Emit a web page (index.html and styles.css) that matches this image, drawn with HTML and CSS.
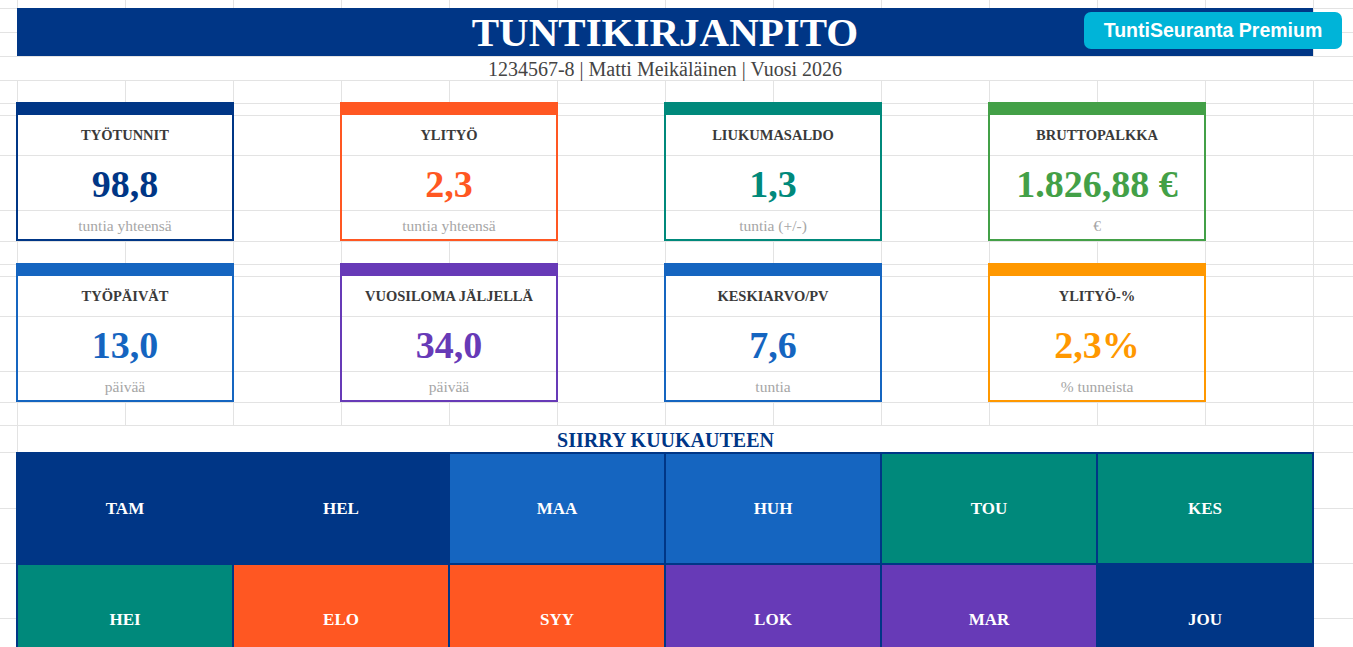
FILE: index.html
```html
<!DOCTYPE html>
<html lang="fi">
<head>
  <meta charset="UTF-8" />
  <meta name="viewport" content="width=device-width, initial-scale=1.0"/>
  <title>Tuntikirjanpito</title>
  <link rel="stylesheet" href="styles.css">
</head>
<body>
  <header class="title-bar">
    <h1>TUNTIKIRJANPITO</h1>
    <a class="premium" href="#">TuntiSeuranta Premium</a>
  </header>
  <div class="subtitle">1234567-8 | Matti Meikäläinen | Vuosi 2026</div>

  <div class="cards">
    <div class="card navy">
      <div class="card-label">TYÖTUNNIT</div>
      <div class="card-value">98,8</div>
      <div class="card-note">tuntia yhteensä</div>
    </div>
    <div class="card red">
      <div class="card-label">YLITYÖ</div>
      <div class="card-value">2,3</div>
      <div class="card-note">tuntia yhteensä</div>
    </div>
    <div class="card teal">
      <div class="card-label">LIUKUMASALDO</div>
      <div class="card-value">1,3</div>
      <div class="card-note">tuntia (+/-)</div>
    </div>
    <div class="card green">
      <div class="card-label">BRUTTOPALKKA</div>
      <div class="card-value">1.826,88 €</div>
      <div class="card-note">€</div>
    </div>
    <div class="card blue">
      <div class="card-label">TYÖPÄIVÄT</div>
      <div class="card-value">13,0</div>
      <div class="card-note">päivää</div>
    </div>
    <div class="card purple">
      <div class="card-label">VUOSILOMA JÄLJELLÄ</div>
      <div class="card-value">34,0</div>
      <div class="card-note">päivää</div>
    </div>
    <div class="card blue">
      <div class="card-label">KESKIARVO/PV</div>
      <div class="card-value">7,6</div>
      <div class="card-note">tuntia</div>
    </div>
    <div class="card orange">
      <div class="card-label">YLITYÖ-%</div>
      <div class="card-value">2,3%</div>
      <div class="card-note">% tunneista</div>
    </div>
  </div>

  <h2 class="section-title">SIIRRY KUUKAUTEEN</h2>
  <nav class="months">
    <a class="month navy" href="#">TAM</a>
    <a class="month navy" href="#">HEL</a>
    <a class="month blue" href="#">MAA</a>
    <a class="month blue" href="#">HUH</a>
    <a class="month teal" href="#">TOU</a>
    <a class="month teal" href="#">KES</a>
    <a class="month teal" href="#">HEI</a>
    <a class="month red" href="#">ELO</a>
    <a class="month red" href="#">SYY</a>
    <a class="month purple" href="#">LOK</a>
    <a class="month purple" href="#">MAR</a>
    <a class="month navy" href="#">JOU</a>
  </nav>
</body>
</html>
```

FILE: styles.css
```css
:root {
  --grid: #e3e3e3;
  --navy: #003686;
}

html, body {
  height: 100%;
}

/* sheet background: column lines every 108px, row lines at the sheet's row edges */
body {
  margin: 0;
  overflow: hidden;
  font-family: "Liberation Serif", "Times New Roman", serif;
  background-color: #fff;
  background-image:
    linear-gradient(90deg, var(--grid) 1px, transparent 1px),
    linear-gradient(180deg,
      transparent 8px, var(--grid) 8px 9px, transparent 9px 32px,
      var(--grid) 32px 33px, transparent 33px 56px,
      var(--grid) 56px 57px, transparent 57px 80px,
      var(--grid) 80px 81px, transparent 81px 103px,
      var(--grid) 103px 104px, transparent 104px 115px,
      var(--grid) 115px 116px, transparent 116px 155px,
      var(--grid) 155px 156px, transparent 156px 210px,
      var(--grid) 210px 211px, transparent 211px 241px,
      var(--grid) 241px 242px, transparent 242px 264px,
      var(--grid) 264px 265px, transparent 265px 276px,
      var(--grid) 276px 277px, transparent 277px 316px,
      var(--grid) 316px 317px, transparent 317px 371px,
      var(--grid) 371px 372px, transparent 372px 402px,
      var(--grid) 402px 403px, transparent 403px 425px,
      var(--grid) 425px 426px, transparent 426px 452px,
      var(--grid) 452px 453px, transparent 453px 508px,
      var(--grid) 508px 509px, transparent 509px 563px,
      var(--grid) 563px 564px, transparent 564px 618px,
      var(--grid) 618px 619px, transparent 619px);
  background-size: 108px 100%, 100% 100%;
  background-position: 17px 0, 0 0;
  background-repeat: repeat-x, no-repeat;
}

.navy   { --c: var(--navy); }
.red    { --c: #ff5722; }
.teal   { --c: #00897b; }
.green  { --c: #43a047; }
.blue   { --c: #1565c0; }
.purple { --c: #673ab7; }
.orange { --c: #ff9800; }

.title-bar {
  position: relative;
  margin: 8px 0 0 17px;
  width: 1296px;
  height: 48px;
  background: var(--navy);
}

.title-bar h1 {
  margin: 0;
  color: #fff;
  font-size: 41px;
  line-height: 48px;
  text-align: center;
}

.premium {
  position: absolute;
  top: 4px;
  right: -29px;
  width: 258px;
  height: 37px;
  border-radius: 7px;
  background: #00b4d8;
  color: #fff;
  font-family: "Liberation Sans", Arial, sans-serif;
  font-weight: bold;
  font-size: 19.5px;
  line-height: 37px;
  text-align: center;
  text-decoration: none;
}

.subtitle {
  height: 24px;
  box-sizing: border-box;
  padding: 1px 40px 0 17px;
  border-top: 1px solid var(--grid);
  background: #fff;
  color: #444;
  font-size: 20px;
  line-height: 22px;
  text-align: center;
}

.cards {
  display: grid;
  grid-template-columns: repeat(4, 218px);
  column-gap: 106px;
  row-gap: 22px;
  padding-top: 22px;
  margin-left: 16px;
}

.card {
  display: flex;
  flex-direction: column;
  height: 139px;
  box-sizing: border-box;
  border: 2px solid var(--c);
  border-top-width: 13px;
  background: #fff;
  text-align: center;
}

.card-label {
  height: 40px;
  border-bottom: 1px solid var(--grid);
  color: #3a3a3a;
  font-weight: bold;
  font-size: 14.5px;
  line-height: 41px;
}

.card-value {
  height: 54px;
  border-bottom: 1px solid var(--grid);
  color: var(--c);
  font-weight: bold;
  font-size: 38px;
  line-height: 56px;
}

.card-note {
  flex: 1;
  padding-top: 2px;
  color: #a6a6a6;
  font-size: 15.5px;
  line-height: 26px;
}

.section-title {
  margin: 24px 0 0 18px;
  width: 1295px;
  height: 26px;
  box-sizing: border-box;
  padding-top: 3px;
  background: #fff;
  color: var(--navy);
  font-size: 20px;
  line-height: 23px;
  text-align: center;
}

.months {
  display: grid;
  grid-template-columns: repeat(6, 1fr);
  grid-auto-rows: 111px;
  margin-left: 16px;
  width: 1298px;
  box-sizing: border-box;
  border: 1px solid var(--navy);
}

.month {
  display: flex;
  align-items: center;
  justify-content: center;
  border: 1px solid var(--navy);
  background: var(--c);
  color: #fff;
  font-weight: bold;
  font-size: 17px;
  text-decoration: none;
}
```
